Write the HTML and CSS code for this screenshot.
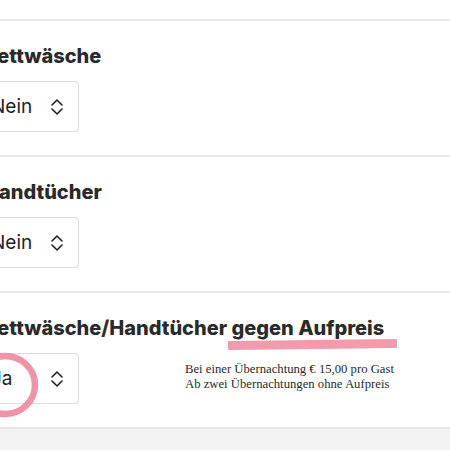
FILE: index.html
```html
<!DOCTYPE html>
<html lang="de">
<head>
<meta charset="utf-8">
<title>Optionen</title>
<link rel="stylesheet" href="styles.css">
</head>
<body>
<div class="top"></div>
<div class="form">
  <section class="field">
    <h2 class="label">Bettwäsche</h2>
    <div class="row">
      <div class="select">
        <span class="value">Nein</span>
        <svg class="chev" width="14" height="18" viewBox="0 0 14 18"><path d="M2 7 L7 2 L12 7 M2 11 L7 16 L12 11" fill="none" stroke="#222" stroke-width="1.6" stroke-linecap="round" stroke-linejoin="round"/></svg>
      </div>
    </div>
  </section>
  <section class="field">
    <h2 class="label">Handtücher</h2>
    <div class="row">
      <div class="select">
        <span class="value">Nein</span>
        <svg class="chev" width="14" height="18" viewBox="0 0 14 18"><path d="M2 7 L7 2 L12 7 M2 11 L7 16 L12 11" fill="none" stroke="#222" stroke-width="1.6" stroke-linecap="round" stroke-linejoin="round"/></svg>
      </div>
    </div>
  </section>
  <section class="field">
    <h2 class="label">Bettwäsche/Handtücher <span class="marked">gegen Aufpreis</span></h2>
    <div class="row">
      <div class="select circled">
        <span class="value">Ja</span>
        <svg class="chev" width="14" height="18" viewBox="0 0 14 18"><path d="M2 7 L7 2 L12 7 M2 11 L7 16 L12 11" fill="none" stroke="#222" stroke-width="1.6" stroke-linecap="round" stroke-linejoin="round"/></svg>
        <svg class="ring" width="80" height="76" viewBox="0 0 80 76"><ellipse cx="40" cy="37" rx="30" ry="29" fill="none" stroke="#ee8a9e" stroke-width="6.5" opacity="0.92"/></svg>
      </div>
      <p class="note">Bei einer Übernachtung € 15,00 pro Gast<br>Ab zwei Übernachtungen ohne Aufpreis</p>
    </div>
  </section>
</div>
<div class="footer"></div>
</body>
</html>
```
FILE: styles.css
```css
html, body {
  margin: 0;
  padding: 0;
  background: #ffffff;
  overflow: hidden;
}
body {
  width: 450px;
  height: 450px;
  font-family: Inter, "Liberation Sans", sans-serif;
  color: #2a2a2a;
}
.top {
  height: 19px;
}
.form {
  margin-left: -26px;
}
.field {
  border-top: 2px solid #e9e9e9;
  padding: 23px 0 23px 0;
  height: 88px;
}
.label {
  margin: 0 0 13px 10px;
  font-size: 20px;
  line-height: 24px;
  font-weight: 800;
  color: #2a2a2a;
  white-space: nowrap;
}
.marked {
  position: relative;
  z-index: 0;
}
.marked::after {
  content: "";
  position: absolute;
  left: -4px;
  right: -12px;
  bottom: -9px;
  height: 9px;
  background: #ee8a9e;
  opacity: 0.85;
  border-radius: 1px;
  transform: rotate(-0.7deg);
  z-index: -1;
}
.row {
  display: flex;
  align-items: flex-start;
}
.select {
  position: relative;
  box-sizing: border-box;
  width: 105px;
  height: 51px;
  border: 1px solid #dcdcdc;
  border-radius: 4px;
  display: flex;
  align-items: center;
  padding: 0 0 0 16px;
  background: #fff;
}
.value {
  font-size: 19px;
  color: #222;
  flex: 1;
}
.chev {
  margin-right: 14px;
}
.ring {
  position: absolute;
  left: -10px;
  top: -6px;
  pointer-events: none;
}
.note {
  margin: 9px 0 0 106px;
  font-family: "Liberation Serif", "DejaVu Serif", serif;
  font-size: 12.7px;
  line-height: 15px;
  color: #2a2a2a;
  white-space: nowrap;
}
.footer {
  border-top: 2px solid #e6e6e6;
  background: #f3f3f3;
  height: 40px;
}
```
